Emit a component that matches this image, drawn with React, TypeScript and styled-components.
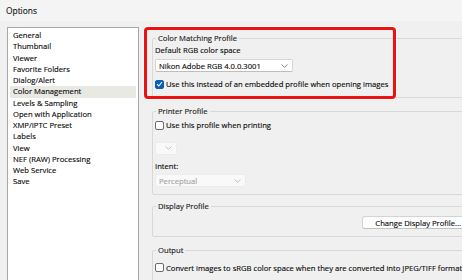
import React from 'react';
import styled, { createGlobalStyle } from 'styled-components';

const GlobalStyle = createGlobalStyle`
  html, body {
    margin: 0;
    padding: 0;
    width: 462px;
    height: 280px;
    overflow: hidden;
    background: #f0f0f0;
  }
  body {
    font-family: "Open Sans", "Noto Sans", sans-serif;
    font-size: 7.65px;
    color: #050505;
    -webkit-text-stroke: 0.12px #050505;
  }
`;

const Window = styled.div`
  width: 462px;
  height: 280px;
  display: flex;
  flex-direction: column;
  background: #f0f0f0;
  overflow: hidden;
`;

const TitleBar = styled.div`
  height: 21px;
  flex: none;
  display: flex;
  align-items: center;
  padding-left: 6px;
  background: #f4f4f4;
  font-size: 8.4px;
  color: #1b1b1b;
`;

const Body = styled.div`
  display: flex;
  padding: 6px 0 0 7px;
  gap: 13px;
  flex: 1;
  min-height: 0;
`;

const CategoryList = styled.ul`
  list-style: none;
  margin: 0;
  padding: 2px 2px 0 2px;
  width: 132px;
  flex: none;
  height: 270px;
  background: #ffffff;
  border: 1px solid #a8a8a8;
  box-sizing: border-box;
`;

const CategoryItem = styled.li<{ $selected?: boolean }>`
  height: 11.27px;
  line-height: 11.27px;
  padding-left: 3px;
  white-space: nowrap;
  background: ${(p) => (p.$selected ? '#e9e9e3' : 'transparent')};
`;

const Content = styled.div`
  width: 330px;
  flex: none;
  display: flex;
  flex-direction: column;
  padding-top: 5.5px;
`;

const Group = styled.fieldset<{ $gap?: number }>`
  margin: ${(p) => p.$gap ?? 0}px 0 0 0;
  padding: 0 3px 7px 2px;
  border: 1px solid #d8d8d8;
  border-radius: 2px;
  min-width: 0;
  display: flex;
  flex-direction: column;
  align-items: flex-start;
`;

const Legend = styled.legend`
  padding: 0 2px;
  margin-left: 1px;
  line-height: 11px;
  color: #1a1a1a;
`;

const HighlightWrap = styled.div`
  position: relative;
`;

const RedFrame = styled.div`
  position: absolute;
  left: -8px;
  top: -5.5px;
  width: 252px;
  height: 72px;
  box-sizing: border-box;
  border: 3px solid #ee1111;
  border-radius: 4px;
  box-shadow: 0 0 0 1px #ffffff;
  pointer-events: none;
`;

const Label = styled.div<{ $top?: number }>`
  line-height: 11px;
  margin-top: ${(p) => p.$top ?? 0}px;
  white-space: nowrap;
`;

const Select = styled.div<{ $width: number; $top?: number; $disabled?: boolean }>`
  width: ${(p) => p.$width}px;
  height: 13px;
  margin-top: ${(p) => p.$top ?? 0}px;
  box-sizing: border-box;
  display: flex;
  align-items: center;
  justify-content: space-between;
  padding: 0 4px 0 3px;
  background: ${(p) => (p.$disabled ? '#f9f9f9' : '#ffffff')};
  border: 1px solid ${(p) => (p.$disabled ? '#ececec' : '#d6d6d6')};
  border-bottom-color: ${(p) => (p.$disabled ? '#ececec' : '#bdbdbd')};
  border-radius: 2px;
  color: ${(p) => (p.$disabled ? '#a2a2a2' : '#050505')};
  -webkit-text-stroke-color: ${(p) => (p.$disabled ? '#a2a2a2' : '#050505')};
  white-space: nowrap;
`;

const CheckRow = styled.label<{ $top?: number }>`
  display: flex;
  align-items: center;
  gap: 2px;
  height: 11px;
  margin-top: ${(p) => p.$top ?? 0}px;
  white-space: nowrap;
`;

const Box = styled.span<{ $checked?: boolean }>`
  width: 9px;
  height: 9px;
  box-sizing: border-box;
  border-radius: 2px;
  display: flex;
  align-items: center;
  justify-content: center;
  background: ${(p) => (p.$checked ? '#0a5fb4' : '#ffffff')};
  border: 1px solid ${(p) => (p.$checked ? '#0a5fb4' : '#6b6b6b')};
  flex: none;
`;

const ButtonRow = styled.div`
  align-self: stretch;
  display: flex;
  justify-content: flex-end;
  padding-right: 4px;
  margin-top: 4px;
`;

const Button = styled.div`
  height: 13px;
  box-sizing: border-box;
  padding: 0 12px;
  display: flex;
  align-items: center;
  background: #fdfdfd;
  border: 1px solid #d4d4d4;
  border-bottom-color: #c0c0c0;
  border-radius: 3px;
  white-space: nowrap;
`;

const Chevron = ({ color = '#666' }: { color?: string }) => (
  <svg width="7" height="4" viewBox="0 0 7 4">
    <path d="M0.5 0.5 L3.5 3.3 L6.5 0.5" fill="none" stroke={color} strokeWidth="0.8" />
  </svg>
);

const Check = () => (
  <svg width="7" height="6" viewBox="0 0 7 6">
    <path d="M1 3.2 L2.8 5 L6 1" fill="none" stroke="#fff" strokeWidth="1.1" />
  </svg>
);

const categories = [
  'General',
  'Thumbnail',
  'Viewer',
  'Favorite Folders',
  'Dialog/Alert',
  'Color Management',
  'Levels & Sampling',
  'Open with Application',
  'XMP/IPTC Preset',
  'Labels',
  'View',
  'NEF (RAW) Processing',
  'Web Service',
  'Save',
];

export default function App() {
  return (
    <>
      <GlobalStyle />
      <Window>
        <TitleBar>Options</TitleBar>
        <Body>
          <CategoryList>
            {categories.map((c) => (
              <CategoryItem key={c} $selected={c === 'Color Management'}>
                {c}
              </CategoryItem>
            ))}
          </CategoryList>
          <Content>
            <HighlightWrap>
              <Group>
                <Legend>Color Matching Profile</Legend>
                <Label $top={1}>Default RGB color space</Label>
                <Select $width={138} $top={3.5}>
                  <span>Nikon Adobe RGB 4.0.0.3001</span>
                  <Chevron />
                </Select>
                <CheckRow $top={6.5}>
                  <Box $checked>
                    <Check />
                  </Box>
                  Use this instead of an embedded profile when opening images
                </CheckRow>
              </Group>
              <RedFrame />
            </HighlightWrap>

            <Group $gap={8}>
              <Legend>Printer Profile</Legend>
              <CheckRow $top={3}>
                <Box />
                Use this profile when printing
              </CheckRow>
              <Select $width={22} $top={11} $disabled>
                <span />
                <Chevron color="#b5b5b5" />
              </Select>
              <Label $top={6}>Intent:</Label>
              <Select $width={91} $top={2.5} $disabled>
                <span>Perceptual</span>
                <Chevron color="#b5b5b5" />
              </Select>
            </Group>

            <Group $gap={6}>
              <Legend>Display Profile</Legend>
              <ButtonRow>
                <Button>Change Display Profile...</Button>
              </ButtonRow>
            </Group>

            <Group $gap={8}>
              <Legend>Output</Legend>
              <CheckRow $top={6}>
                <Box />
                Convert images to sRGB color space when they are converted into JPEG/TIFF format
              </CheckRow>
            </Group>
          </Content>
        </Body>
      </Window>
    </>
  );
}
